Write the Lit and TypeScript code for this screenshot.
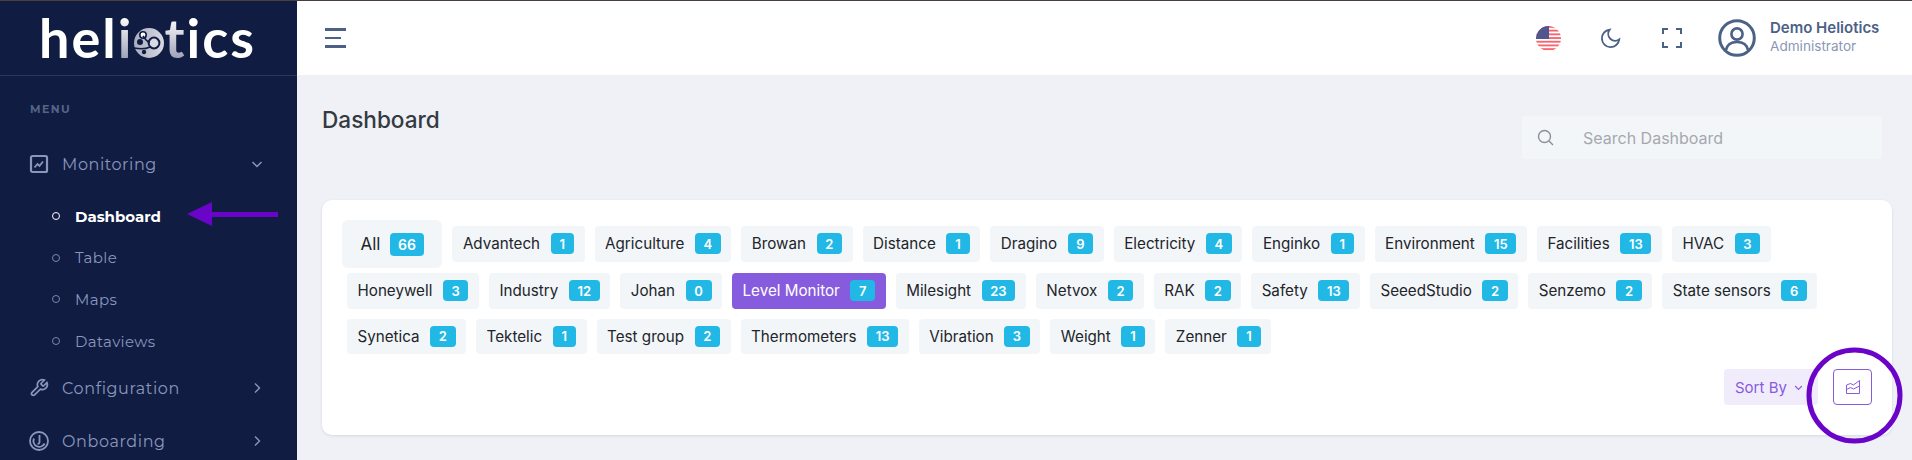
import { LitElement, html, css, svg } from "lit";
import { customElement } from "lit/decorators.js";

const rows: [string, number][][] = [
  [["Advantech",1],["Agriculture",4],["Browan",2],["Distance",1],["Dragino",9],["Electricity",4],["Enginko",1],["Environment",15],["Facilities",13],["HVAC",3]],
  [["Honeywell",3],["Industry",12],["Johan",0],["Level Monitor",7],["Milesight",23],["Netvox",2],["RAK",2],["Safety",13],["SeeedStudio",2],["Senzemo",2],["State sensors",6]],
  [["Synetica",2],["Tektelic",1],["Test group",2],["Thermometers",13],["Vibration",3],["Weight",1],["Zenner",1]],
];

const chevDown = html`<svg class="chev" viewBox="0 0 12 12"><path d="M1.5 4l4.5 4.5L10.5 4" fill="none" stroke="currentColor" stroke-width="1.5"/></svg>`;
const chevRight = html`<svg class="chev" viewBox="0 0 12 12"><path d="M4 1.5L8.5 6 4 10.5" fill="none" stroke="currentColor" stroke-width="1.4"/></svg>`;

const stripes = [0,1,2,3,4,5,6].map(i => svg`<rect x="0" y="${i*3.7}" width="25" height="1.85" fill="#f8646e"/>`);

@customElement("app-root")
export class AppRoot extends LitElement {
  static styles = css`
    :host { display: block; height: 460px; overflow: hidden; position: relative; font-family: Inter, "Liberation Sans", sans-serif; background: #eff1f6; }
    .layout { display: grid; grid-template-columns: 297px 1fr; height: 460px; border-top: 1px solid #4a3f3f; box-sizing: border-box; }
    .side { background: #101c42; color: #8a97bd; overflow: hidden; font-family: Montserrat, "Open Sans", sans-serif; }
    .logo { height: 74px; border-bottom: 1px solid #2b3659; box-sizing: content-box; display: flex; align-items: center; padding-left: 39px; color: #fff; font-family: Lato, sans-serif; font-weight: 700; font-size: 54px; line-height: 1; letter-spacing: 2px; }
    .logo .g { background: linear-gradient(180deg, #fff 10%, #8f93ad 100%); -webkit-background-clip: text; background-clip: text; color: transparent; }
    .logo svg { width: 30px; height: 30px; margin: 9px 0 0 1px; flex: none; }
    .menu-label { font-size: 11px; font-weight: 700; letter-spacing: 1.4px; color: #566386; padding: 26px 0 0 30px; line-height: 15px; }
    .item { display: flex; align-items: center; padding-left: 29px; height: 24px; font-size: 16px; letter-spacing: 0.6px; }
    .item svg.ic { width: 20px; height: 20px; flex: none; margin-right: 13px; }
    .item .chev { width: 12px; height: 12px; margin-left: auto; margin-right: 34px; }
    .mon { margin-top: 35px; }
    .sub { display: flex; align-items: center; padding-left: 52px; height: 24px; font-size: 15px; margin-top: 17.7px; letter-spacing: 0.35px; }
    .sub i { width: 6px; height: 6px; border: 1px solid #7b88ad; border-radius: 50%; margin-right: 15px; flex: none; }
    .sub.on { color: #fff; font-weight: 700; margin-top: 28px; letter-spacing: 0; }
    .sub.on i { border-color: #fff; }
    .cfg { margin-top: 23px; }
    .onb { margin-top: 29px; }
    .main { display: flex; flex-direction: column; min-width: 0; }
    .head { height: 74px; background: #fff; display: flex; align-items: center; padding: 0 0 0 28px; }
    .burger { display: flex; flex-direction: column; gap: 6px; width: 21px; }
    .burger b { height: 2.4px; background: #4b6186; display: block; }
    .burger b:nth-child(2) { width: 16px; }
    .tools { margin-left: auto; display: flex; align-items: center; color: #4b6186; }
    .tools svg { flex: none; display: block; }
    .flag { width: 25px; height: 25px; border-radius: 50%; }
    .moon { width: 22px; height: 22px; margin-left: 39px; }
    .full { width: 20px; height: 20px; margin-left: 40px; }
    .user { width: 38px; height: 38px; margin-left: 36px; }
    .who { margin: -4px 15px 0 14px; width: 127px; }
    .who b { display: block; font-size: 15px; font-weight: 600; line-height: 20px; }
    .who span { display: block; font-size: 13.6px; color: #8b97b6; line-height: 17px; }
    .body { padding: 0 20px 0 25px; }
    .top { display: flex; justify-content: space-between; align-items: flex-start; height: 125px; }
    h1 { margin: 30px 0 0; font-size: 22.6px; font-weight: 500; color: #343a40; line-height: 30px; }
    .search { margin: 41px 10px 0 0; width: 360px; height: 43px; background: #f3f6f9; border-radius: 4px; display: flex; align-items: center; color: #a5a8af; font-size: 16px; }
    .search svg { width: 17px; height: 17px; margin: 0 29px 0 15px; color: #8b909a; flex: none; }
    .card { background: #fff; border-radius: 10px; height: 235px; box-shadow: 0 1px 3px rgba(40,50,80,.12); padding: 20px 20px 0 20px; box-sizing: border-box; color: #212529; }
    .row { display: flex; gap: 10px; padding-left: 5px; margin-bottom: 10px; }
    .row.first { padding-left: 0; align-items: flex-start; margin-bottom: 5px; }
    .row.first .chip:not(.all) { margin-top: 6px; }
    .chip { display: flex; align-items: center; gap: 10.5px; height: 35.6px; padding: 0 10.5px; background: #f3f6f9; border-radius: 4px; font-size: 15.2px; box-sizing: border-box; }
    .badge { background: #22b8e6; color: #fff; font-size: 13px; font-weight: 600; height: 21px; min-width: 23.5px; padding: 0 8.7px; box-sizing: border-box; border-radius: 4px; display: flex; align-items: center; justify-content: center; }
    .chip.all { height: 48px; padding: 0 18.5px; font-size: 17px; border-radius: 6px; font-weight: 400; gap: 9.5px; }
    .chip.all .badge { height: 23px; padding: 0 8px; font-size: 14px; }
    .chip.on { background: #875bdd; color: #fff; }
    .acts { display: flex; justify-content: flex-end; align-items: center; margin-top: 15px; }
    .sort { display: flex; align-items: center; height: 36px; width: 94px; background: #f1ecfb; color: #875bdd; border-radius: 4px; font-size: 15px; padding-left: 11px; box-sizing: border-box; gap: 7px; }
    .sort .chev { width: 9px; height: 9px; }
    .ibtn { width: 39px; height: 36px; border: 1px solid #875bdd; border-radius: 4px; margin-left: 15px; display: flex; align-items: center; justify-content: center; box-sizing: border-box; color: #875bdd; }
    .ibtn svg { width: 16px; height: 16px; }
    .ann { position: absolute; inset: 0; width: 1912px; height: 460px; pointer-events: none; }
  `;

  render() {
    return html`
      <div class="layout">
        <aside class="side">
          <div class="logo">
            <span>hel</span><span class="g">i</span>
            <svg viewBox="0 0 30 30"><defs><linearGradient id="lg" x1="0" x2="1" y1="0" y2="0"><stop offset="0" stop-color="#a9acbf"/><stop offset="1" stop-color="#d8d9e2"/></linearGradient></defs>
              <circle cx="15" cy="15" r="15" fill="url(#lg)"/>
              <circle cx="9" cy="7" r="3.2" fill="#fff" stroke="#101c42" stroke-width="1.6"/>
              <circle cx="6" cy="14" r="3" fill="#101c42"/>
              <circle cx="20" cy="15" r="5.4" fill="#d8d9e2" stroke="#101c42" stroke-width="2"/>
              <path d="M9 8 Q13 14 16 14.5 M0 20Q10 22 16 19" fill="none" stroke="#101c42" stroke-width="1.6"/>
              <circle cx="10" cy="24" r="2.2" fill="#101c42"/>
            </svg>
            <span class="g">t</span><span>ics</span>
          </div>
          <div class="menu-label">MENU</div>
          <div class="item mon">
            <svg class="ic" viewBox="0 0 20 20" fill="none" stroke="currentColor" stroke-width="2.2"><rect x="2" y="2" width="16" height="16" rx="1.5"/><path d="M5.5 13.5l3-3.5 2 2 3.5-4.5" stroke-width="1.8"/></svg>
            Monitoring ${chevDown}
          </div>
          <div class="sub on"><i></i>Dashboard</div>
          <div class="sub"><i></i>Table</div>
          <div class="sub"><i></i>Maps</div>
          <div class="sub"><i></i>Dataviews</div>
          <div class="item cfg">
            <svg class="ic" viewBox="0 0 24 24" fill="none" stroke="currentColor" stroke-width="2.1"><path d="M14.7 6.3a1 1 0 0 0 0 1.4l1.6 1.6a1 1 0 0 0 1.4 0l3.8-3.8a6 6 0 0 1-7.9 7.9l-6.9 6.9a2.1 2.1 0 0 1-3-3l6.9-6.9a6 6 0 0 1 7.9-7.9z"/></svg>
            Configuration ${chevRight}
          </div>
          <div class="item onb">
            <svg class="ic" viewBox="0 0 20 20" fill="none" stroke="currentColor" stroke-width="1.8"><circle cx="10" cy="10" r="9"/><path d="M5 7.5A5.8 5.8 0 0 0 15.6 12.5M10.5 4v7q0 1.8-2 1.8"/></svg>
            Onboarding ${chevRight}
          </div>
        </aside>
        <div class="main">
          <header class="head">
            <div class="burger"><b></b><b></b><b></b></div>
            <div class="tools">
              <svg class="flag" viewBox="0 0 25 25"><rect width="25" height="25" fill="#fff"/>${stripes}<rect width="13" height="13" fill="#52568f"/></svg>
              <svg class="moon" viewBox="0 0 24 24" fill="none" stroke="currentColor" stroke-width="2"><path d="M21 13.5A9.5 9.5 0 1 1 10.5 3a7.5 7.5 0 0 0 10.5 10.5z"/></svg>
              <svg class="full" viewBox="0 0 20 20" fill="none" stroke="currentColor" stroke-width="2"><path d="M1 6V1h5M14 1h5v5M19 14v5h-5M6 19H1v-5"/></svg>
              <svg class="user" viewBox="0 0 38 38" fill="none" stroke="currentColor" stroke-width="3"><circle cx="19" cy="19" r="17.3"/><circle cx="19" cy="15" r="5.6" stroke-width="2.6"/><path d="M8 31c1-5 5-8 11-8s10 3 11 8" stroke-width="2.6"/></svg>
              <div class="who"><b>Demo Heliotics</b><span>Administrator</span></div>
            </div>
          </header>
          <div class="body">
            <div class="top">
              <h1>Dashboard</h1>
              <div class="search">
                <svg viewBox="0 0 17 17" fill="none" stroke="currentColor" stroke-width="1.4"><circle cx="7.5" cy="7.5" r="6"/><path d="M12 12l4 4"/></svg>
                Search Dashboard
              </div>
            </div>
            <section class="card">
              <div class="row first">
                <div class="chip all">All <span class="badge">66</span></div>
                ${rows[0].map(([n, c]) => this.chip(n, c))}
              </div>
              <div class="row">${rows[1].map(([n, c]) => this.chip(n, c))}</div>
              <div class="row">${rows[2].map(([n, c]) => this.chip(n, c))}</div>
              <div class="acts">
                <div class="sort">Sort By ${chevDown}</div>
                <div class="ibtn">
                  <svg viewBox="0 0 16 16" fill="none" stroke="currentColor" stroke-width="1"><path d="M1.5 6v8.5h13V1.5M1.5 6l4-1.5 3 1.5 6-4.5M1.5 10.5l4-2 3 1.5 6-3"/></svg>
                </div>
              </div>
            </section>
          </div>
        </div>
      </div>
      <svg class="ann" viewBox="0 0 1912 460">
        <path d="M278 214.5H205" stroke="#6a04c8" stroke-width="5" fill="none"/>
        <path d="M187 214l25-12v24z" fill="#6a04c8"/>
        <circle cx="1854.5" cy="395.5" r="45.5" fill="none" stroke="#6a04c8" stroke-width="5"/>
      </svg>
    `;
  }

  chip(n: string, c: number) {
    return html`<div class="chip ${n === "Level Monitor" ? "on" : ""}">${n} <span class="badge">${c}</span></div>`;
  }
}
